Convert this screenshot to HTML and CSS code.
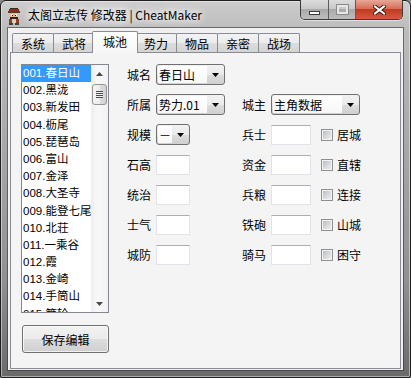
FILE: index.html
```html
<!DOCTYPE html>
<html lang="zh-CN">
<head>
    <meta charset="UTF-8">
    <title>太阁立志传 修改器 | CheatMaker</title>
    <link rel="stylesheet" href="styles.css">
</head>
<body>
    <div class="window">
        <!-- 标题栏 -->
        <div class="titlebar">
            <svg class="app-icon" width="14" height="17" viewBox="0 0 14 17">
                <rect x="3" y="0" width="8" height="2" fill="#3a2a22"/>
                <rect x="2" y="1" width="10" height="4" fill="#8c2c1c"/>
                <rect x="1" y="3" width="12" height="2" fill="#5a3a2a"/>
                <rect x="3" y="5" width="8" height="5" fill="#e9b48c"/>
                <rect x="4" y="6" width="2" height="2" fill="#fff"/>
                <rect x="8" y="6" width="2" height="2" fill="#fff"/>
                <rect x="5" y="7" width="1" height="1" fill="#111"/>
                <rect x="8" y="7" width="1" height="1" fill="#111"/>
                <rect x="3" y="9" width="8" height="2" fill="#2e2a28"/>
                <rect x="2" y="11" width="10" height="4" fill="#9c3a26"/>
                <rect x="5" y="11" width="4" height="4" fill="#d8d0c0"/>
                <rect x="2" y="15" width="4" height="2" fill="#2c4a2c"/>
                <rect x="8" y="15" width="4" height="2" fill="#2c4a2c"/>
            </svg>
            <span class="title">太阁立志传 修改器 | CheatMaker</span>
            <div class="caption">
                <div class="cap cap-min"><span class="min-glyph"></span></div>
                <div class="cap cap-max"><span class="max-glyph"></span></div>
                <div class="cap cap-close">
                    <svg width="13" height="10" viewBox="0 0 13 10">
                        <path d="M2 1.5 L11 8.5 M11 1.5 L2 8.5" stroke="#3a1a14" stroke-width="4" stroke-linecap="square"/>
                        <path d="M2 1.5 L11 8.5 M11 1.5 L2 8.5" stroke="#ffffff" stroke-width="2" stroke-linecap="square"/>
                    </svg>
                </div>
            </div>
        </div>

        <!-- 客户区 -->
        <div class="client">
            <ul class="tabs">
                <li class="tab">系统</li>
                <li class="tab">武将</li>
                <li class="tab active">城池</li>
                <li class="tab">势力</li>
                <li class="tab">物品</li>
                <li class="tab">亲密</li>
                <li class="tab">战场</li>
            </ul>

            <div class="tab-page">
                <div class="left-col">
                    <div class="listbox">
                        <ul class="list-items">
                            <li class="selected">001.春日山</li>
                            <li>002.黑泷</li>
                            <li>003.新发田</li>
                            <li>004.枥尾</li>
                            <li>005.琵琶岛</li>
                            <li>006.富山</li>
                            <li>007.金泽</li>
                            <li>008.大圣寺</li>
                            <li>009.能登七尾</li>
                            <li>010.北荘</li>
                            <li>011.一乘谷</li>
                            <li>012.霞</li>
                            <li>013.金崎</li>
                            <li>014.手筒山</li>
                            <li>015.箕轮</li>
                        </ul>
                        <div class="scrollbar">
                            <div class="sb-arrow">
                                <svg width="7" height="4" viewBox="0 0 7 4"><polygon points="3.5,0 7,4 0,4" fill="#4a4a4a"/></svg>
                            </div>
                            <div class="sb-thumb"><span class="grip"></span></div>
                            <div class="sb-track"></div>
                            <div class="sb-arrow">
                                <svg width="7" height="4" viewBox="0 0 7 4"><polygon points="0,0 7,0 3.5,4" fill="#4a4a4a"/></svg>
                            </div>
                        </div>
                    </div>
                    <button class="btn">保存编辑</button>
                </div>

                <div class="form">
                    <span class="label col-left">城名</span>
                    <div class="combo combo-mid">
                        <span class="combo-text">春日山</span>
                        <span class="combo-arrow"><svg width="7" height="4" viewBox="0 0 7 4"><polygon points="0,0 7,0 3.5,4" fill="#000"/></svg></span>
                    </div>

                    <span class="label col-left">所属</span>
                    <div class="combo combo-mid">
                        <span class="combo-text">势力.01</span>
                        <span class="combo-arrow"><svg width="7" height="4" viewBox="0 0 7 4"><polygon points="0,0 7,0 3.5,4" fill="#000"/></svg></span>
                    </div>
                    <span class="label col-right">城主</span>
                    <div class="combo combo-wide">
                        <span class="combo-text">主角数据</span>
                        <span class="combo-arrow"><svg width="7" height="4" viewBox="0 0 7 4"><polygon points="0,0 7,0 3.5,4" fill="#000"/></svg></span>
                    </div>

                    <span class="label col-left">规模</span>
                    <div class="combo combo-small">
                        <span class="combo-text">－</span>
                        <span class="combo-arrow"><svg width="7" height="4" viewBox="0 0 7 4"><polygon points="0,0 7,0 3.5,4" fill="#000"/></svg></span>
                    </div>
                    <span class="label col-right">兵士</span>
                    <input class="textbox box-right" type="text">
                    <label class="check"><span class="check-box"></span>居城</label>

                    <span class="label col-left">石高</span>
                    <input class="textbox box-left" type="text">
                    <span class="label col-right">资金</span>
                    <input class="textbox box-right" type="text">
                    <label class="check"><span class="check-box"></span>直辖</label>

                    <span class="label col-left">统治</span>
                    <input class="textbox box-left" type="text">
                    <span class="label col-right">兵粮</span>
                    <input class="textbox box-right" type="text">
                    <label class="check"><span class="check-box"></span>连接</label>

                    <span class="label col-left">士气</span>
                    <input class="textbox box-left" type="text">
                    <span class="label col-right">铁砲</span>
                    <input class="textbox box-right" type="text">
                    <label class="check"><span class="check-box"></span>山城</label>

                    <span class="label col-left">城防</span>
                    <input class="textbox box-left" type="text">
                    <span class="label col-right">骑马</span>
                    <input class="textbox box-right" type="text">
                    <label class="check"><span class="check-box"></span>困守</label>
                </div>
            </div>
        </div>
    </div>
</body>
</html>
```

FILE: styles.css
```css
/* 重置 */
* {
    margin: 0;
    padding: 0;
    box-sizing: border-box;
}

body {
    width: 411px;
    height: 378px;
    overflow: hidden;
    font-family: "Noto Sans CJK SC", "Liberation Sans", sans-serif;
    font-size: 12px;
    color: #000;
    background: #8a8a8a;
}

/* 窗口边框 */
.window {
    width: 411px;
    height: 378px;
    display: flex;
    flex-direction: column;
    padding: 0 7px 7px 7px;
    border: 1px solid #1e1e1e;
    border-radius: 6px 6px 2px 2px;
    background: linear-gradient(to bottom, #cdcdcd 0, #bcbcbc 28px, #a8a8a8 140px, #909090 280px, #6a6a6a 100%);
    box-shadow: inset 0 0 0 1px rgba(255, 255, 255, 0.45);
}

/* 标题栏 */
.titlebar {
    height: 27px;
    display: flex;
    align-items: flex-start;
}

.app-icon {
    margin: 7px 0 0 -1px;
}

.title {
    margin: 6px 0 0 7px;
    line-height: 16px;
    white-space: nowrap;
    text-shadow: 0 0 6px #fff, 0 0 10px #fff, 0 0 14px #fff;
}

.caption {
    margin: -1px 0 0 auto;
    height: 20px;
    display: flex;
    border: 1px solid #3a3a3a;
    border-top: none;
    border-radius: 0 0 5px 5px;
    overflow: hidden;
    box-shadow: 0 1px 0 rgba(255, 255, 255, 0.5);
}

.cap {
    width: 27px;
    display: flex;
    align-items: center;
    justify-content: center;
    border-right: 1px solid #5c5c5c;
    background: linear-gradient(to bottom, #dcdcdc 0, #c8c8c8 45%, #a9a9a9 50%, #bdbdbd 100%);
}

.cap-min {
    width: 28px;
}

.cap-close {
    width: 46px;
    border-right: none;
    background: linear-gradient(to bottom, #e8a898 0, #d66e58 45%, #c13b20 50%, #d25a3e 100%);
}

.min-glyph {
    width: 11px;
    height: 4px;
    margin-top: 6px;
    background: #fff;
    border: 1px solid #3a3a3a;
}

.max-glyph {
    width: 11px;
    height: 9px;
    border: 2px solid #e6e6e6;
    outline: 1px solid #8a8a8a;
}

/* 客户区 */
.client {
    flex: 1;
    display: flex;
    flex-direction: column;
    padding: 3px 2px 1px 2px;
    background: #f0f0f0;
    box-shadow: 0 0 0 1px rgba(40, 40, 40, 0.55);
}

/* 选项卡 */
.tabs {
    list-style: none;
    display: flex;
    align-items: flex-end;
    height: 21px;
    padding-left: 2px;
}

.tab {
    width: 42px;
    height: 19px;
    margin-right: -1px;
    border: 1px solid #898c95;
    border-bottom: none;
    border-radius: 2px 2px 0 0;
    text-align: center;
    line-height: 19px;
    background: linear-gradient(to bottom, #f3f3f3 0, #ebebeb 50%, #dddddd 51%, #d4d4d4 100%);
}

.tab.active {
    position: relative;
    z-index: 1;
    width: 46px;
    height: 22px;
    margin: 0 -3px -1px -2px;
    line-height: 19px;
    background: linear-gradient(to bottom, #ffffff, #f6f6f6);
}

.tab-page {
    flex: 1;
    display: flex;
    gap: 18px;
    padding: 11px 0 0 10px;
    border: 1px solid #898c95;
    background: #f4f4f4;
}

/* 左列：列表框 + 按钮 */
.left-col {
    display: flex;
    flex-direction: column;
}

.listbox {
    width: 88px;
    height: 249px;
    display: flex;
    border: 1px solid #828790;
    background: #fff;
    overflow: hidden;
}

.list-items {
    list-style: none;
    flex: 1;
    overflow: hidden;
    font-family: "Liberation Sans", "Noto Sans CJK SC", sans-serif;
    font-size: 11.5px;
}

.list-items li {
    height: 17.2px;
    line-height: 17px;
    padding-left: 1px;
    white-space: nowrap;
}

.list-items li.selected {
    background: #3399ff;
    color: #fff;
}

.scrollbar {
    width: 17px;
    display: flex;
    flex-direction: column;
    background: linear-gradient(to right, #eeeeee, #f8f8f8 40%, #f2f2f2);
}

.sb-arrow {
    height: 17px;
    display: flex;
    align-items: center;
    justify-content: center;
}

.sb-thumb {
    height: 21px;
    margin: 2px 1px 0 1px;
    display: flex;
    align-items: center;
    justify-content: center;
    border: 1px solid #959595;
    border-radius: 3px;
    background: linear-gradient(to right, #f4f4f4 0, #ececec 50%, #dcdcdc 51%, #d2d2d2 100%);
}

.grip {
    width: 7px;
    height: 7px;
    background: repeating-linear-gradient(to bottom, #4c4c4c 0, #4c4c4c 1px, #f0f0f0 1px, #f0f0f0 2px);
}

.sb-track {
    flex: 1;
}

.btn {
    width: 87px;
    height: 28px;
    margin: 12px 0 0 1px;
    font-family: inherit;
    font-size: 12px;
    color: #000;
    border: 1px solid #707070;
    border-radius: 3px;
    background: linear-gradient(to bottom, #f2f2f2 0, #ebebeb 50%, #dddddd 51%, #cfcfcf 100%);
    box-shadow: inset 0 0 0 1px rgba(255, 255, 255, 0.7);
}

/* 右侧表单 */
.form {
    display: grid;
    grid-template-columns: 29px 86px 29px 50px auto;
    grid-auto-rows: 21px;
    row-gap: 9px;
    align-items: center;
    align-content: start;
}

.label {
    white-space: nowrap;
}

.col-left {
    grid-column: 1;
}

.col-right {
    grid-column: 3;
}

.combo {
    height: 21px;
    display: flex;
    border: 1px solid #707070;
    border-radius: 3px;
    overflow: hidden;
    background: linear-gradient(to bottom, #f2f2f2 0, #ebebeb 50%, #dddddd 51%, #cfcfcf 100%);
}

.combo-mid {
    width: 69px;
}

.combo-small {
    width: 34px;
}

.combo-wide {
    grid-column: 4 / span 2;
    width: 89px;
}

.combo-text {
    flex: 1;
    margin: 1px 0 1px 1px;
    padding-left: 1px;
    line-height: 17px;
    white-space: nowrap;
    overflow: hidden;
    background: linear-gradient(to bottom, #ffffff, #f7f7f7);
}

.combo-arrow {
    width: 17px;
    display: flex;
    align-items: center;
    justify-content: center;
}

.textbox {
    height: 20px;
    border: 1px solid #e2e3ea;
    border-top-color: #abadb3;
    background: #fff;
    outline: none;
}

.box-left {
    width: 34px;
}

.box-right {
    width: 40px;
}

.check {
    display: flex;
    align-items: center;
    gap: 4px;
    white-space: nowrap;
}

.check-box {
    width: 12px;
    height: 12px;
    border: 1px solid #8e8f8f;
    background: linear-gradient(135deg, #b4b8bd 0, #dcdde0 60%, #f0f0f1 100%);
    box-shadow: inset 0 0 0 1px #f4f4f4;
}
```
